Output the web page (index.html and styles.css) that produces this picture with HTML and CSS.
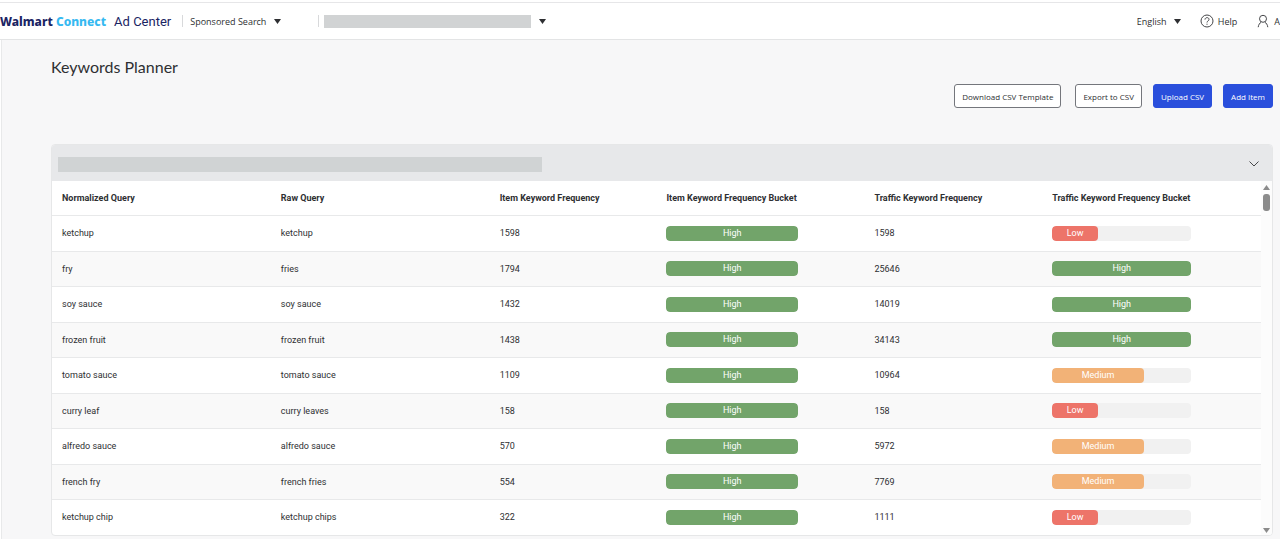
FILE: index.html
```html
<!DOCTYPE html>
<html lang="en">
<head>
    <meta charset="UTF-8">
    <meta name="viewport" content="width=device-width, initial-scale=1.0">
    <title>Keywords Planner</title>
    <link rel="stylesheet" href="styles.css">
</head>
<body>
<header class="topbar">
    <a class="brand" href="#"><b>Walmart</b> <b class="light">Connect</b> <span>Ad Center</span></a>
    <div class="dropdown divided product">
        <select aria-label="Product"><option>Sponsored Search</option></select>
        <svg class="caret" viewBox="0 0 7 5"><path d="M0 0h7L3.500 5z"/></svg>
    </div>
    <div class="dropdown divided account">
        <select class="masked" aria-label="Account"><option></option></select>
        <svg class="caret" viewBox="0 0 7 5"><path d="M0 0h7L3.500 5z"/></svg>
    </div>
    <nav class="tools">
        <div class="dropdown">
            <select aria-label="Language"><option>English</option></select>
            <svg class="caret" viewBox="0 0 7 5"><path d="M0 0h7L3.500 5z"/></svg>
        </div>
        <a class="tool" href="#">
            <svg class="icon" viewBox="0 0 14 14"><circle cx="7" cy="7" r="6"/><path d="M5 5.600c0-2.600 4-2.600 4-.2C9 7 7 6.900 7 8.500M7 9.700v1.100"/></svg>
            Help
        </a>
        <a class="tool" href="#">
            <svg class="icon" viewBox="0 0 14 14"><circle cx="7" cy="4.800" r="3.500"/><path d="M2.200 13.200c.3-2.600 1.500-4 3-5.100M11.800 13.200c-.3-2.600-1.500-4-3-5.100"/></svg>
            A
        </a>
    </nav>
</header>

<main class="page">
    <h1>Keywords Planner</h1>
    <div class="actions">
        <button>Download CSV Template</button>
        <button class="export">Export to CSV</button>
        <button class="primary">Upload CSV</button>
        <button class="primary">Add Item</button>
    </div>

    <section class="panel">
        <div class="panel-head">
            <div class="item-name"></div>
            <button class="collapse" aria-label="Collapse">
                <svg viewBox="0 0 10 6"><path d="M.5.5 5 5 9.500.5"/></svg>
            </button>
        </div>
        <div class="panel-body">
            <table>
                <thead>
                <tr>
                    <th class="query">Normalized Query</th>
                    <th class="query">Raw Query</th>
                    <th class="item-freq">Item Keyword Frequency</th>
                    <th class="item-bucket">Item Keyword Frequency Bucket</th>
                    <th class="traffic-freq">Traffic Keyword Frequency</th>
                    <th>Traffic Keyword Frequency Bucket</th>
                </tr>
                </thead>
                <tbody>
                <tr>
                    <td>ketchup</td><td>ketchup</td><td>1598</td>
                    <td><div class="bar"><div class="high">High</div></div></td>
                    <td>1598</td>
                    <td><div class="bar"><div class="low">Low</div></div></td>
                </tr>
                <tr>
                    <td>fry</td><td>fries</td><td>1794</td>
                    <td><div class="bar"><div class="high">High</div></div></td>
                    <td>25646</td>
                    <td><div class="bar"><div class="high">High</div></div></td>
                </tr>
                <tr>
                    <td>soy sauce</td><td>soy sauce</td><td>1432</td>
                    <td><div class="bar"><div class="high">High</div></div></td>
                    <td>14019</td>
                    <td><div class="bar"><div class="high">High</div></div></td>
                </tr>
                <tr>
                    <td>frozen fruit</td><td>frozen fruit</td><td>1438</td>
                    <td><div class="bar"><div class="high">High</div></div></td>
                    <td>34143</td>
                    <td><div class="bar"><div class="high">High</div></div></td>
                </tr>
                <tr>
                    <td>tomato sauce</td><td>tomato sauce</td><td>1109</td>
                    <td><div class="bar"><div class="high">High</div></div></td>
                    <td>10964</td>
                    <td><div class="bar"><div class="medium">Medium</div></div></td>
                </tr>
                <tr>
                    <td>curry leaf</td><td>curry leaves</td><td>158</td>
                    <td><div class="bar"><div class="high">High</div></div></td>
                    <td>158</td>
                    <td><div class="bar"><div class="low">Low</div></div></td>
                </tr>
                <tr>
                    <td>alfredo sauce</td><td>alfredo sauce</td><td>570</td>
                    <td><div class="bar"><div class="high">High</div></div></td>
                    <td>5972</td>
                    <td><div class="bar"><div class="medium">Medium</div></div></td>
                </tr>
                <tr>
                    <td>french fry</td><td>french fries</td><td>554</td>
                    <td><div class="bar"><div class="high">High</div></div></td>
                    <td>7769</td>
                    <td><div class="bar"><div class="medium">Medium</div></div></td>
                </tr>
                <tr>
                    <td>ketchup chip</td><td>ketchup chips</td><td>322</td>
                    <td><div class="bar"><div class="high">High</div></div></td>
                    <td>1111</td>
                    <td><div class="bar"><div class="low">Low</div></div></td>
                </tr>
                </tbody>
            </table>
            <div class="scrollbar">
                <svg viewBox="0 0 7 5"><path d="M0 5h7L3.500 0z"/></svg>
                <div class="thumb"></div>
                <svg viewBox="0 0 7 5"><path d="M0 0h7L3.500 5z"/></svg>
            </div>
        </div>
    </section>
</main>
</body>
</html>
```
FILE: styles.css
```css
* {
    box-sizing: border-box;
}

body {
    margin: 0;
    padding-top: 2px;
    background-color: #fff;
    color: #2e2f32;
    font-family: Roboto, "Open Sans", sans-serif;
    font-size: 9px;
    overflow-x: hidden;
}

a {
    color: inherit;
    text-decoration: none;
}

button,
select {
    font: inherit;
    color: inherit;
}

.topbar {
    display: flex;
    align-items: center;
    height: 38px;
    border-top: 1px solid #e6e6e8;
    border-bottom: 1px solid #e3e4e5;
    font-family: "Open Sans", sans-serif;
    white-space: nowrap;
}

.brand {
    color: #1a2463;
    font-family: "Noto Sans", sans-serif;
    font-size: 12px;
}

.brand b {
    font-weight: 800;
}

.brand .light {
    color: #35b9f1;
}

.brand span {
    margin-left: 5px;
    font-family: Roboto, sans-serif;
    font-size: 13px;
}

.dropdown {
    display: flex;
    align-items: center;
    gap: 7px;
}

.dropdown select {
    appearance: none;
    padding: 0;
    border: 0;
    background: none;
}

.dropdown .masked {
    width: 207px;
    height: 13px;
    border-radius: 0;
    background-color: #d1d3d4;
}

.divided::before {
    content: "";
    width: 1px;
    height: 12px;
    background-color: #d8d9db;
}

.product {
    margin-left: 11px;
}

.account {
    gap: 5px;
    margin-left: 37px;
}

.account .caret {
    margin-left: 3px;
}

.caret {
    width: 7px;
    height: 5px;
    fill: #2e2f32;
}

.tools {
    display: flex;
    align-items: center;
    gap: 19px;
    margin-left: auto;
}

.tool {
    display: flex;
    align-items: center;
    gap: 4px;
}

.icon {
    width: 14px;
    height: 14px;
    fill: none;
    stroke: #46474a;
}

.page {
    border-left: 1px solid #e8e9ea;
    margin-left: 1px;
    padding: 17px 7px 3px 49px;
    background-color: #f7f7f8;
}

h1 {
    margin: 0;
    font-family: Lato, sans-serif;
    font-size: 16px;
    font-weight: 400;
    line-height: 20px;
}

.actions {
    display: flex;
    justify-content: flex-end;
    gap: 11px;
    margin-top: 7px;
}

.actions button {
    height: 24px;
    padding: 0 7px;
    border: 1px solid #74767c;
    border-radius: 3px;
    background-color: #fff;
    font-family: "Open Sans", sans-serif;
    font-size: 8px;
}

.actions .export {
    margin-left: 3px;
}

.actions .primary {
    border-color: #2a4fdc;
    background-color: #2a4fdc;
    color: #fff;
}

.panel {
    margin-top: 36px;
    border: 1px solid #e6e7e8;
    border-radius: 4px;
    overflow: hidden;
    background-color: #fff;
}

.panel-head {
    display: flex;
    align-items: center;
    justify-content: space-between;
    height: 36px;
    padding: 2px 13px 0 6px;
    background-color: #e7e8ea;
}

.item-name {
    width: 484px;
    height: 15px;
    background-color: #d0d3d4;
}

.collapse {
    display: flex;
    padding: 0;
    border: 0;
    background: none;
}

.collapse svg {
    width: 10px;
    height: 6px;
    fill: none;
    stroke: #46474a;
}

.panel-body {
    display: flex;
}

table {
    flex: 1;
    border-collapse: collapse;
    table-layout: fixed;
}

th,
td {
    height: 36px;
    padding: 0 10px;
    text-align: left;
    white-space: nowrap;
}

tr:nth-child(even) td {
    height: 35px;
}

th {
    height: 34px;
}

tr {
    border-bottom: 1px solid #e8e9ea;
}

tbody tr:nth-child(even) {
    background-color: #f9f9f9;
}

tbody tr:last-child {
    border-bottom: 0;
}

.query {
    width: 18.1%;
}

.item-freq {
    width: 13.8%;
}

.item-bucket {
    width: 17.2%;
}

.traffic-freq {
    width: 14.7%;
}

.bar {
    width: 70%;
    border-radius: 4px;
    overflow: hidden;
    background-color: #f1f1f1;
    color: #fff;
    line-height: 15px;
    text-align: center;
}

.bar div {
    border-radius: 4px;
}

.high {
    background-color: #72a46a;
}

.medium {
    width: 66%;
    background-color: #f2b277;
}

.low {
    width: 33%;
    background-color: #ed7469;
}

.scrollbar {
    display: flex;
    flex-direction: column;
    align-items: center;
    width: 11px;
    padding: 4px 0 2px;
    background-color: #fcfcfc;
}

.scrollbar svg {
    width: 7px;
    height: 5px;
    fill: #8b8b8b;
}

.thumb {
    width: 7px;
    height: 17px;
    margin: 4px 0 auto;
    border-radius: 3px;
    background-color: #8b8b8b;
}
```
